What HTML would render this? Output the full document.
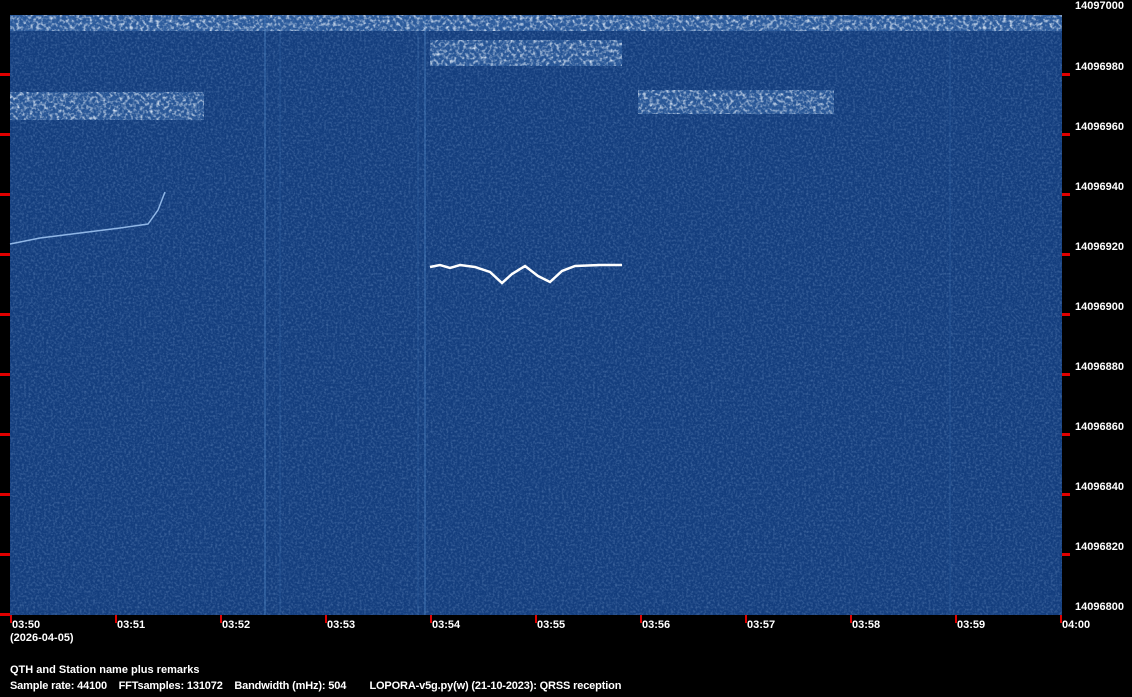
<!DOCTYPE html>
<html><head><style>
html,body{margin:0;padding:0;background:#000;width:1132px;height:697px;overflow:hidden}
.t{position:absolute;color:#fff;font:bold 11px "Liberation Sans",sans-serif;white-space:pre;line-height:12px}
</style></head><body>
<svg width="1132" height="697" style="position:absolute;left:0;top:0">
<defs>
<filter id="n" x="0" y="0" width="100%" height="100%">
<feTurbulence type="fractalNoise" baseFrequency="0.45" numOctaves="2" seed="3"/>
<feColorMatrix type="matrix" values="0 0 0 0 0.4  0 0 0 0 0.6  0 0 0 0 0.9  1.2 0 0 0 -0.5"/>
</filter>
<filter id="b" x="0" y="0" width="100%" height="100%">
<feTurbulence type="fractalNoise" baseFrequency="0.3" numOctaves="2" seed="7"/>
<feColorMatrix type="matrix" values="0 0 0 0 0.85  0 0 0 0 0.92  0 0 0 0 1  2.2 0 0 0 -1.0"/>
</filter>
</defs>
<rect x="10" y="15" width="1052" height="600" fill="#143e7e"/>
<rect x="10" y="15" width="1052" height="600" filter="url(#n)" opacity="0.5"/>
<g stroke="#4f86c4" stroke-width="1.5" opacity="0.5">
<line x1="265" y1="15" x2="265" y2="615"/><line x1="280" y1="15" x2="280" y2="615" opacity="0.4"/>
<line x1="425" y1="15" x2="425" y2="615"/><line x1="418" y1="15" x2="418" y2="615" opacity="0.4"/>
<line x1="950" y1="15" x2="950" y2="615" opacity="0.4"/>
</g>
<rect x="10" y="15" width="1052" height="16" fill="#3e72b4" opacity="0.5"/>
<rect x="10" y="15" width="1052" height="16" filter="url(#b)"/>
<rect x="430" y="40" width="192" height="26" fill="#3e72b4" opacity="0.4"/>
<rect x="430" y="40" width="192" height="26" filter="url(#b)"/>
<rect x="10" y="92" width="194" height="28" fill="#3e72b4" opacity="0.4"/>
<rect x="10" y="92" width="194" height="28" filter="url(#b)"/>
<rect x="638" y="90" width="196" height="24" fill="#3e72b4" opacity="0.4"/>
<rect x="638" y="90" width="196" height="24" filter="url(#b)"/>
<polyline points="10,244 40,238 80,233 120,228 148,224 158,210 165,192" fill="none" stroke="#8fb6e6" stroke-width="1.5"/>
<polyline points="430,267 440,265 450,268 460,265 475,267 490,272 502,283 512,274 525,266 538,276 550,282 562,271 575,266 600,265 622,265" fill="none" stroke="#fff" stroke-width="2.5"/>
<g fill="#e00000">
<rect x="0" y="73" width="10" height="3"/><rect x="0" y="133" width="10" height="3"/><rect x="0" y="193" width="10" height="3"/><rect x="0" y="253" width="10" height="3"/><rect x="0" y="313" width="10" height="3"/><rect x="0" y="373" width="10" height="3"/><rect x="0" y="433" width="10" height="3"/><rect x="0" y="493" width="10" height="3"/><rect x="0" y="553" width="10" height="3"/><rect x="0" y="613" width="10" height="3"/>
<rect x="1062" y="73" width="8" height="3"/><rect x="1062" y="133" width="8" height="3"/><rect x="1062" y="193" width="8" height="3"/><rect x="1062" y="253" width="8" height="3"/><rect x="1062" y="313" width="8" height="3"/><rect x="1062" y="373" width="8" height="3"/><rect x="1062" y="433" width="8" height="3"/><rect x="1062" y="493" width="8" height="3"/><rect x="1062" y="553" width="8" height="3"/>
<rect x="10" y="615" width="2" height="8"/><rect x="115" y="615" width="2" height="8"/><rect x="220" y="615" width="2" height="8"/><rect x="325" y="615" width="2" height="8"/><rect x="430" y="615" width="2" height="8"/><rect x="535" y="615" width="2" height="8"/><rect x="640" y="615" width="2" height="8"/><rect x="745" y="615" width="2" height="8"/><rect x="850" y="615" width="2" height="8"/><rect x="955" y="615" width="2" height="8"/><rect x="1060" y="615" width="2" height="8"/>
</g>
</svg>
<div class="t" style="left:1075px;top:0px">14097000</div>
<div class="t" style="left:1075px;top:61px">14096980</div>
<div class="t" style="left:1075px;top:121px">14096960</div>
<div class="t" style="left:1075px;top:181px">14096940</div>
<div class="t" style="left:1075px;top:241px">14096920</div>
<div class="t" style="left:1075px;top:301px">14096900</div>
<div class="t" style="left:1075px;top:361px">14096880</div>
<div class="t" style="left:1075px;top:421px">14096860</div>
<div class="t" style="left:1075px;top:481px">14096840</div>
<div class="t" style="left:1075px;top:541px">14096820</div>
<div class="t" style="left:1075px;top:601px">14096800</div>
<div class="t" style="left:12px;top:619px">03:50</div>
<div class="t" style="left:117px;top:619px">03:51</div>
<div class="t" style="left:222px;top:619px">03:52</div>
<div class="t" style="left:327px;top:619px">03:53</div>
<div class="t" style="left:432px;top:619px">03:54</div>
<div class="t" style="left:537px;top:619px">03:55</div>
<div class="t" style="left:642px;top:619px">03:56</div>
<div class="t" style="left:747px;top:619px">03:57</div>
<div class="t" style="left:852px;top:619px">03:58</div>
<div class="t" style="left:957px;top:619px">03:59</div>
<div class="t" style="left:1062px;top:619px">04:00</div>
<div class="t" style="left:10px;top:632px">(2026-04-05)</div>
<div class="t" style="left:10px;top:664px">QTH and Station name plus remarks</div>
<div class="t" style="left:10px;top:680px;letter-spacing:-0.15px">Sample rate: 44100    FFTsamples: 131072    Bandwidth (mHz): 504        LOPORA-v5g.py(w) (21-10-2023): QRSS reception</div>
</body></html>
